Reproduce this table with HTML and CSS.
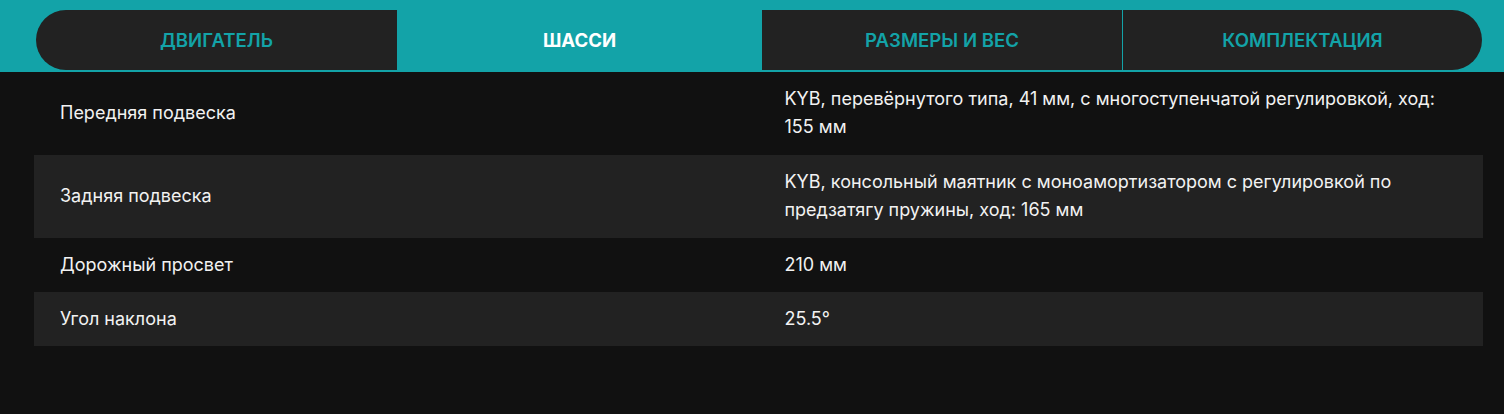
FILE: index.html
```html
<!DOCTYPE html>
<html lang="ru">
<head>
<meta charset="utf-8">
<title>Шасси</title>
<link rel="stylesheet" href="styles.css">
</head>
<body>
<div class="tabbar">
  <div class="tabs">
    <div class="tab tab-first">Двигатель</div>
    <div class="tab tab-active">Шасси</div>
    <div class="tab tab-third">Размеры и вес</div>
    <div class="tab tab-last">Комплектация</div>
  </div>
</div>
<div class="specs">
  <div class="row">
    <div class="cell label">Передняя подвеска</div>
    <div class="cell value">KYB, перевёрнутого типа, 41 мм, с многоступенчатой регулировкой, ход: 155 мм</div>
  </div>
  <div class="row alt">
    <div class="cell label">Задняя подвеска</div>
    <div class="cell value">KYB, консольный маятник с моноамортизатором с регулировкой по предзатягу пружины, ход: 165 мм</div>
  </div>
  <div class="row">
    <div class="cell label">Дорожный просвет</div>
    <div class="cell value">210 мм</div>
  </div>
  <div class="row alt">
    <div class="cell label">Угол наклона</div>
    <div class="cell value">25.5°</div>
  </div>
</div>
</body>
</html>
```
FILE: styles.css
```css
html, body {
  margin: 0;
  padding: 0;
  background: #111111;
  font-family: Inter, "Noto Sans", sans-serif;
  color: #f2f2f2;
}

.tabbar {
  background: #13a3a8;
  padding: 10px 22px 2px 36px;
}

.tabs {
  display: grid;
  grid-template-columns: 361px 365px 361px 359px;
  height: 60px;
}

.tab {
  display: flex;
  align-items: center;
  justify-content: center;
  background: #222222;
  color: #13a3a8;
  font-size: 18.6px;
  font-weight: 600;
  text-transform: uppercase;
}

.tab-first {
  border-radius: 30px 0 0 30px;
}

.tab-active {
  background: #13a3a8;
  color: #ffffff;
  font-weight: 700;
}

.tab-third {
  border-right: 1px solid #13a3a8;
}

.tab-last {
  border-radius: 0 30px 30px 0;
}

.specs {
  margin: 0 21px 0 34px;
}

.row {
  display: grid;
  grid-template-columns: 1fr 1fr;
}

.row.alt {
  background: #222222;
}

.cell {
  padding: 12.7px 26px 12.7px 26px;
  font-size: 18px;
  line-height: 28.8px;
  display: flex;
  align-items: center;
}
```
